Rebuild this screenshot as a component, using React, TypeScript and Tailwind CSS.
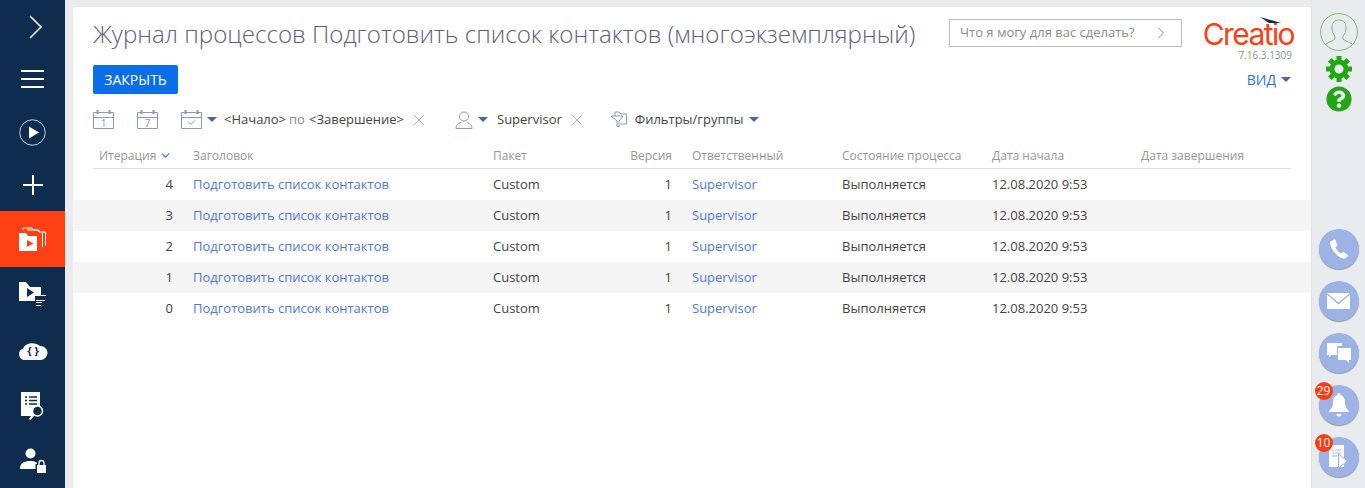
import { ChevronDown, ChevronRight, X } from "lucide-react";
import { FaQuestionCircle } from "react-icons/fa";

const rows = [4, 3, 2, 1, 0];
const gridCols = "grid grid-cols-[100px_300px_100px_99px_150px_150px_149px_1fr]";
const cogTeeth = [0, 45, 90, 135, 180, 225, 270, 315];

function Caret() {
  return <span className="inline-block w-0 h-0 border-x-[5px] border-x-transparent border-t-[5px] border-t-[#4b6795]" />;
}

function NavItem({ className, children }: { className: string; children: React.ReactNode }) {
  return <div className={`flex items-center justify-center ${className}`}>{children}</div>;
}

function CalendarIcon({ label, check }: { label?: string; check?: boolean }) {
  return (
    <svg width="21" height="21" viewBox="0 0 21 21" fill="none" stroke="#8a9bb8">
      <path d="M.5 3.5h20v16H.5zM.5 8.5h20" />
      <path d="M4.5 1v4M16.5 1v4" strokeWidth="2" />
      {check && <path d="M7 12.5l3 3 4-4" />}
      {label && (
        <text x="10.5" y="18" textAnchor="middle" fontSize="10" fill="#8a9bb8" stroke="none">
          {label}
        </text>
      )}
    </svg>
  );
}

function RoundButton({ badge, children }: { badge?: string; children: React.ReactNode }) {
  return (
    <div className="relative w-10 h-10 rounded-full bg-[#9db3e6] shadow-[0_1px_1px_#9a9a9a] flex items-center justify-center">
      {badge && (
        <span className="absolute -left-[4px] -top-[3px] w-[18px] h-[18px] rounded-full bg-[#ff3b0f] text-white text-[12px] leading-[18px] text-center">
          {badge}
        </span>
      )}
      {children}
    </div>
  );
}

export default function App() {
  return (
    <div className="w-[1365px] h-[488px] overflow-hidden flex bg-[#e8ecee] font-['Open_Sans',sans-serif]">
      {/* left nav */}
      <div className="w-[65px] shrink-0 bg-[#0e2c4e] flex flex-col">
        <NavItem className="h-[54px] pl-[7px]">
          <svg width="14" height="24" viewBox="0 0 14 24" fill="none" stroke="#fff" strokeWidth="1.5">
            <path d="M1 1l11 11L1 23" />
          </svg>
        </NavItem>
        <NavItem className="h-[52px]">
          <svg width="23" height="19" viewBox="0 0 23 19" fill="#fff">
            <path d="M0 0h23v2H0zM0 8h23v2H0zM0 16h23v2H0z" />
          </svg>
        </NavItem>
        <NavItem className="h-[54px]">
          <svg width="27" height="27" viewBox="0 0 27 27" fill="none">
            <circle cx="13.5" cy="13.5" r="12.75" stroke="#fff" strokeWidth="0.8" />
            <path d="M10 7.500l10 6-10 6z" fill="#fff" />
          </svg>
        </NavItem>
        <NavItem className="h-[52px]">
          <svg width="20" height="20" viewBox="0 0 20 20" fill="#fff">
            <path d="M9 0h2v20H9zM0 9h20v2H0z" />
          </svg>
        </NavItem>
        <NavItem className="h-[56px] bg-[#ff4013]">
          <svg width="27" height="24" viewBox="0 0 27 24" fill="none">
            <path d="M4 3V1h9l2 2h5v2M13 1" stroke="#fff" />
            <path d="M8 3h10l2 2h6.500v14M23.500 5v15" stroke="#fff" />
            <path d="M0 6h7l2 3h9v15H0z" fill="#fff" />
            <path d="M8 13l6.500 3.500L8 20z" fill="#ff4013" />
          </svg>
        </NavItem>
        <NavItem className="h-[55px]">
          <svg width="27" height="24" viewBox="0 0 27 24" fill="none">
            <path d="M0 0h7l4 5h11v9H16v5H0z" fill="#fff" />
            <path d="M8 6l7 4.500L8 15z" fill="#0e2c4e" />
            <path d="M17 13.500h10M17 18.500h9M17 20.500h6M17 23.500h5" stroke="#fff" />
          </svg>
        </NavItem>
        <NavItem className="h-[57px]">
          <svg width="30" height="20" viewBox="0 0 30 20">
            <path d="M6 20a6 6 0 0 1-1-11.500A10 8 0 0 1 22 6a7 7 0 0 1 1 14z" fill="#fff" />
            <text x="15" y="15" textAnchor="middle" fontSize="11" fontWeight="700" fill="#0e2c4e">{"{ }"}</text>
          </svg>
        </NavItem>
        <NavItem className="h-[55px]">
          <svg width="24" height="28" viewBox="0 0 24 28" fill="none">
            <path d="M0 0h19v24H0z" fill="#fff" />
            <path d="M4 5h2M8 5h8M4 8.500h2M8 8.500h8M4 12h2M8 12h8" stroke="#0e2c4e" strokeWidth="1.500" />
            <circle cx="16.500" cy="19" r="5" fill="#0e2c4e" stroke="#fff" strokeWidth="1.500" />
            <path d="M13 22.500L8.500 27.500" stroke="#fff" strokeWidth="2" />
          </svg>
        </NavItem>
        <NavItem className="h-[55px]">
          <svg width="26" height="25" viewBox="0 0 26 25" fill="#fff">
            <circle cx="10.500" cy="5.500" r="5" />
            <path d="M0 21c0-6 4-8 10.500-8 2.500 0 5 .5 6.500 2v1h-1.500v5z" />
            <path d="M17 17h9v8h-9z" />
            <path d="M19 17v-2a2.500 2.500 0 0 1 5 0v2" fill="none" stroke="#fff" strokeWidth="1.300" />
          </svg>
        </NavItem>
      </div>

      {/* main panel */}
      <div className="ml-2 mt-[7px] w-[1238px] bg-white rounded-t-[2px] px-5 flex flex-col">
        <div className="flex items-start justify-between h-[58px]">
          <h1 className="text-[24.15px] font-light leading-[33px] mt-[10px] text-[#5e5e78] whitespace-nowrap">
            Журнал процессов Подготовить список контактов (многоэкземплярный)
          </h1>
          <div className="flex items-start mr-[-3px]">
            <div className="mt-[12px] w-[233px] h-[28px] border border-[#bdbdbd] flex items-center justify-between pl-[10px] pr-[10px] text-[13px] text-[#8c8c8c]">
              <span>Что я могу для вас сделать?</span>
              <ChevronRight size={20} strokeWidth={1} color="#777" />
            </div>
            <div className="relative ml-[20px] w-[92px] flex flex-col items-end pt-[15px]">
              <span className="font-['Inter',sans-serif] text-[30px] leading-[24px] tracking-[-1.6px] text-[#ff4013] whitespace-nowrap">Creatio</span>
              <svg className="absolute right-[12px] top-[10px]" width="22" height="7" viewBox="0 0 22 7">
                <path d="M0 0l21 6H9z" fill="#0e2c4e" />
              </svg>
              <span className="mr-[2px] text-[10px] leading-[12px] mt-[3px] text-[#8f8f8f]">7.16.3.1309</span>
            </div>
          </div>
        </div>

        <div className="flex items-center justify-between h-[29px]">
          <button className="w-[85px] h-[29px] rounded-[2px] bg-[#0a6ee8] text-white text-[14px]">ЗАКРЫТЬ</button>
          <div className="flex items-center gap-[5px] text-[14px] text-[#2f73d8]">
            ВИД <Caret />
          </div>
        </div>

        <div className="mt-[15px] h-[21px] flex items-center text-[13px] text-[#444]">
          <CalendarIcon label="1" />
          <span className="ml-[23px]"><CalendarIcon label="7" /></span>
          <span className="ml-[23px] mr-[5px]"><CalendarIcon check /></span>
          <Caret />
          <span className="ml-[7px]">&lt;Начало&gt;</span>
          <span className="mx-[3px] text-[#8c8c8c]">по</span>
          <span className="ml-[1px]">&lt;Завершение&gt;</span>
          <X size={18} strokeWidth={0.8} color="#777" className="ml-[6px]" />
          <svg className="ml-[27px] mr-[5px]" width="18" height="18" viewBox="0 0 18 18" fill="none" stroke="#8a9bb8">
            <circle cx="9" cy="5.500" r="4.500" />
            <path d="M1 17.500c0-5 4-5 5.500-6.500M17 17.500c0-5-4-5-5.500-6.500M1 17.500h16" />
          </svg>
          <Caret />
          <span className="ml-[9px]">Supervisor</span>
          <X size={18} strokeWidth={0.8} color="#777" className="ml-[6px]" />
          <svg className="ml-[24px] mr-[8px]" width="17" height="17" viewBox="0 0 17 17" fill="none" stroke="#8a9bb8">
            <path d="M5 5V1h4l2 2h5.500v10H10M1 5h12L9 10v6l-2-1v-5z" />
          </svg>
          <span>Фильтры/группы</span>
          <span className="ml-[5px] flex"><Caret /></span>
        </div>

        <div className="mt-[15px]">
          <div className={`${gridCols} h-[24px] pb-[2px] items-center border-b border-[#dfdfdf] text-[12px] text-[#979797]`}>
            <div className="pl-[6px] flex items-center gap-[3px]">
              Итерация <ChevronDown size={13} color="#2f73d8" strokeWidth={2} />
            </div>
            <div>Заголовок</div>
            <div>Пакет</div>
            <div className="text-right pr-[20px]">Версия</div>
            <div>Ответственный</div>
            <div>Состояние процесса</div>
            <div>Дата начала</div>
            <div>Дата завершения</div>
          </div>
          {rows.map((n, i) => (
            <div
              key={n}
              className={`${gridCols} -mx-5 px-5 h-[31px] items-center text-[13px] text-[#444] ${i % 2 === 1 ? "bg-[#f5f5f5]" : ""}`}
            >
              <div className="text-right pr-[20px]">{n}</div>
              <div className="text-[#5279d8]">Подготовить список контактов</div>
              <div>Custom</div>
              <div className="text-right pr-[20px]">1</div>
              <div className="text-[#5279d8]">Supervisor</div>
              <div>Выполняется</div>
              <div>12.08.2020 9:53</div>
              <div></div>
            </div>
          ))}
        </div>
      </div>

      {/* right bar */}
      <div className="w-[54px] flex flex-col items-center pt-[13px] border-l border-[#dfe3e5]">
        <svg width="38" height="38" viewBox="0 0 38 38" fill="none" stroke="#7fbf6a">
          <circle cx="19" cy="19" r="18.500" />
          <path d="M19 7c-5 0-7 3-7 8 0 3 1 6 3 8v3c-2 2-6 3-9 5M19 7c5 0 7 3 7 8 0 3-1 6-3 8v3c2 2 6 3 9 5" />
        </svg>
        <svg className="mt-[5px]" width="26" height="26" viewBox="0 0 26 26" fill="none">
          <circle cx="13" cy="13" r="7" stroke="#22a714" strokeWidth="5" />
          {cogTeeth.map((a) => (
            <path key={a} d="M10.500 0h5v6h-5z" fill="#22a714" transform={`rotate(${a} 13 13)`} />
          ))}
        </svg>
        <FaQuestionCircle size={26} color="#22a714" className="mt-[4px]" />
        <div className="mt-[117px] flex flex-col items-center gap-[12px]">
          <RoundButton>
            <svg width="22" height="22" viewBox="0 0 24 24" fill="#fff">
              <path d="M6.600 1.500L3 3.500C1.500 5 2 9 6.500 15c4 5 8.500 8 11.500 7.500l3.500-2.500c.5-.500.500-1 0-1.500l-4-3c-.5-.3-1-.3-1.500 0l-2 1.500c-2-1-5-4.500-6-7l2-1.500c.5-.5.500-1 .3-1.500L8 1.800c-.3-.5-1-.6-1.400-.3z" />
            </svg>
          </RoundButton>
          <RoundButton>
            <svg width="23" height="16" viewBox="0 0 23 16" fill="#fff">
              <path d="M0 0h23L11.500 9.500z" />
              <path d="M0 1.500l11.500 10L23 1.500V16H0z" />
            </svg>
          </RoundButton>
          <RoundButton>
            <svg width="24" height="20" viewBox="0 0 24 20" fill="#fff">
              <path d="M0 0h15v3H10v9H4l-2 3v-3H0z" />
              <path d="M11 5h13v12h-2v3l-3-3h-8z" />
            </svg>
          </RoundButton>
          <RoundButton badge="29">
            <svg width="20" height="24" viewBox="0 0 20 24" fill="#fff">
              <path d="M10 0a1.500 1.500 0 0 1 1.500 2C15 3 16 6 16 10c0 4 2 6 4 8v1H0v-1c2-2 4-4 4-8 0-4 1-7 4.500-8A1.500 1.500 0 0 1 10 0z" />
              <path d="M7.500 21h5a2.500 2.500 0 0 1-5 0z" />
            </svg>
          </RoundButton>
          <RoundButton badge="10">
            <svg width="19" height="24" viewBox="0 0 19 24" fill="#fff">
              <path d="M0 0h15v22H0z" />
              <path d="M3 5h2M6 5h6M3 8h2M6 8h6M3 11h5" stroke="#9db3e6" />
              <path d="M9.500 9l9 7-9 7z" stroke="#9db3e6" />
            </svg>
          </RoundButton>
        </div>
      </div>
    </div>
  );
}
